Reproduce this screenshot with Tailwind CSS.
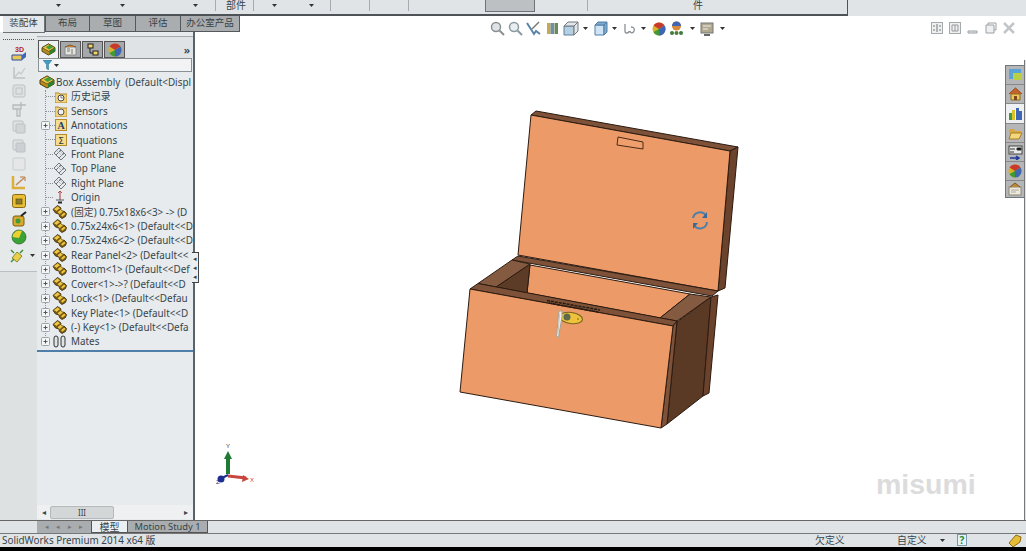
<!DOCTYPE html>
<html lang="en">
<head>
  <meta charset="UTF-8" />
  <title>SolidWorks - Box Assembly</title>
  <script src="https://cdn.jsdelivr.net/npm/@tailwindcss/browser@4"></script>
</head>
<body class="w-[1026px] h-[551px] overflow-hidden bg-white flex flex-col text-[#36454b] font-['Noto_Sans','Noto_Sans_CJK_SC',sans-serif]">

  <!-- shared icons -->
  <svg width="0" height="0" class="absolute">
    <defs>
      <symbol id="part" viewBox="0 0 15 14">
        <path d="M1 4.500 5.500 .5 9 3 8.500 5 11 6.500 12 6l2.500 2.500-1 3L10 13.500 7.500 11.500 7 9 3.500 8z" fill="#7a5c16" stroke="#43340c" stroke-width=".9"/>
        <path d="M1.500 4.200 5.500 1l3 2.200-4 3zM5 7.200 8.500 4.400l2.800 2.100-3.500 2.900zM8.500 10.200l3.600-3 2 1.700-3.600 3z" fill="#f2c640" stroke="#5b4a16" stroke-width=".6"/>
      </symbol>
      <symbol id="assembly" viewBox="0 0 16 14">
        <path d="M1 5 8 1l7 4v4l-7 4-7-4z" fill="#b58c1e" stroke="#4f3d10"/>
        <path d="M1 5 8 1l7 4-7 4z" fill="#eec144" stroke="#4f3d10" stroke-width=".7"/>
        <path d="M5 4.500 9.500 2 13 4.500 8.500 7z" fill="#3f9f3a"/>
        <path d="M9 9v4l6-4V5z" fill="#2f7f30"/>
      </symbol>
      <symbol id="plane" viewBox="0 0 14 14">
        <path d="M6 1l5 5-5 5-5-5zM8 3l5 5-5 5-5-5z" fill="none" stroke="#70777b"/>
        <path d="M4 4l5 5M6 3l5 5" fill="none" stroke="#a4aaae" stroke-width=".7"/>
      </symbol>
      <symbol id="plus" viewBox="0 0 9 9">
        <rect x=".5" y=".5" width="8" height="8" rx="1" fill="#f3f5f6" stroke="#9aa3a8"/>
        <path d="M2.500 4.500h4M4.500 2.500v4" stroke="#555"/>
      </symbol>
      <symbol id="caret" viewBox="0 0 5 3"><path d="M0 0h5L2.500 3z" fill="#333"/></symbol>
      <symbol id="wheel" viewBox="0 0 14 14">
        <circle cx="7" cy="7" r="6.500" fill="#d8b32a"/>
        <path d="M7 7 1.500 3.500A6.500 6.500 0 0 1 12.500 3.500z" fill="#c8392e"/>
        <path d="M7 7 12.500 3.500A6.500 6.500 0 0 1 7 13.500z" fill="#3f66b5"/>
        <path d="M7 7V13.500A6.500 6.500 0 0 1 1.500 10z" fill="#3f9a3a"/>
      </symbol>
    </defs>
  </svg>

  <!-- ribbon, only its bottom strip is in view -->
  <div class="h-[16px] shrink-0 flex bg-[#e0e4e6] text-[10px] leading-[11px]">
    <div class="w-[848px] h-[16px] border-b-2 border-r border-[#4d5356] relative">
      <svg class="absolute left-[56px] top-[4px]" width="5" height="3"><use href="#caret"/></svg>
      <svg class="absolute left-[120px] top-[4px]" width="5" height="3"><use href="#caret"/></svg>
      <svg class="absolute left-[193px] top-[4px]" width="5" height="3"><use href="#caret"/></svg>
      <svg class="absolute left-[272px] top-[4px]" width="5" height="3"><use href="#caret"/></svg>
      <svg class="absolute left-[309px] top-[4px]" width="5" height="3"><use href="#caret"/></svg>
      <div class="absolute left-[215px] top-0 h-[11px] border-l border-[#a5abae]"></div>
      <div class="absolute left-[226px] top-0">部件</div>
      <div class="absolute left-[253px] top-0 h-[11px] border-l border-[#a5abae]"></div>
      <div class="absolute left-[330px] top-0 h-[11px] border-l border-[#a5abae]"></div>
      <div class="absolute left-[369px] top-0 h-[11px] border-l border-[#a5abae]"></div>
      <div class="absolute left-[408px] top-0 h-[11px] border-l border-[#a5abae]"></div>
      <div class="absolute left-[485px] top-0 w-[50px] h-[12px] bg-[#bcc0c2] border-x border-b border-[#6d7376]"></div>
      <div class="absolute left-[587px] top-0 h-[11px] border-l border-[#a5abae]"></div>
      <div class="absolute left-[693px] top-0">件</div>
    </div>
  </div>

  <!-- command manager tabs -->
  <div class="h-[16px] shrink-0 flex pl-[3px] text-[9.500px] leading-[14px] text-center text-[#3a3f42]">
    <div class="w-[42px] h-[17px] bg-[#e4e8ea] border-r border-b border-[#6d7376] z-10">装配体</div>
    <div class="w-[45px] bg-[#a9adaf] border border-t-0 border-[#55595c]">布局</div>
    <div class="w-[46px] bg-[#a9adaf] border border-t-0 border-l-0 border-[#55595c]">草图</div>
    <div class="w-[45px] bg-[#a9adaf] border border-t-0 border-l-0 border-[#55595c]">评估</div>
    <div class="w-[59px] bg-[#a9adaf] border border-t-0 border-l-0 border-[#55595c]">办公室产品</div>
  </div>

  <!-- main area -->
  <div class="flex-1 min-h-0 flex">

    <!-- left icon strip -->
    <div class="w-[37px] shrink-0 flex flex-col bg-[#dee1e2]">
      <div class="h-[240px] flex flex-col items-center pt-[7px] gap-[2.300px] border-b border-[#b9bfc2] bg-[#e6e9ea]">
        <div class="w-[31px] border-t border-dotted border-[#555] mb-[4px]"></div>
        <svg width="16" height="16" viewBox="0 0 16 16"><text x="4" y="6" font-size="7" font-weight="700" fill="#b3261e" font-family="Liberation Sans">3D</text><path d="M1 9h10v5H1z" fill="#e9c75a" stroke="#2d4f9e"/><path d="M11 9l4-3v5l-4 3z" fill="#3d66b8"/></svg>
        <svg width="16" height="16" viewBox="0 0 16 16"><path d="M3 2v11h11" fill="none" stroke="#bcc1c3" stroke-width="1.500"/><path d="M3 13l5-6 2 2 4-6" fill="none" stroke="#c6cacc" stroke-width="1.300"/></svg>
        <svg width="16" height="16" viewBox="0 0 16 16"><rect x="2" y="2" width="12" height="12" rx="2" fill="#dfe2e3" stroke="#bcc1c3"/><rect x="5" y="5" width="6" height="6" fill="none" stroke="#bcc1c3"/></svg>
        <svg width="16" height="16" viewBox="0 0 16 16"><path d="M2 4h8v4H2zM6 8h3v7H6zM10 1v6M10 4h5" fill="#dfe2e3" stroke="#b5babc" stroke-width="1.300"/></svg>
        <svg width="16" height="16" viewBox="0 0 16 16"><rect x="2" y="2" width="10" height="10" rx="1" fill="#dfe2e3" stroke="#bcc1c3"/><rect x="5" y="5" width="9" height="9" rx="1" fill="#d2d6d8" stroke="#bcc1c3"/></svg>
        <svg width="16" height="16" viewBox="0 0 16 16"><rect x="2" y="2" width="10" height="10" rx="1" fill="#dfe2e3" stroke="#bcc1c3"/><rect x="5" y="5" width="9" height="9" rx="1" fill="#ccd0d2" stroke="#bcc1c3"/></svg>
        <svg width="16" height="16" viewBox="0 0 16 16"><rect x="2" y="2" width="12" height="12" rx="1" fill="#e4e6e7" stroke="#c9cdcf"/></svg>
        <svg width="16" height="16" viewBox="0 0 16 16"><path d="M2 2v12h12" fill="none" stroke="#dcae3c" stroke-width="2.500"/><path d="M5 11l8-7" stroke="#c48a50" stroke-width="1.500"/><path d="M9 3h5v4" fill="none" stroke="#b5743c"/></svg>
        <svg width="16" height="16" viewBox="0 0 16 16"><rect x="1.500" y="1.500" width="13" height="13" rx="2" fill="#e9bd36" stroke="#8a6a12"/><rect x="5" y="6" width="6" height="5" fill="#8a7a2a" stroke="#5f5010" stroke-width=".7"/></svg>
        <svg width="16" height="16" viewBox="0 0 16 16"><rect x="2" y="5" width="11" height="10" rx="2" fill="#d8a92c" stroke="#7a5f12"/><circle cx="7" cy="10" r="2.500" fill="#3f9a3a"/><path d="M10 5l5-4" stroke="#222" stroke-width="2"/></svg>
        <svg width="16" height="16" viewBox="0 0 16 16"><circle cx="8" cy="8" r="7" fill="#3aa336" stroke="#25601f" stroke-width=".7"/><path d="M1.500 8A7 7 0 0 1 11 2L8 9z" fill="#ecd02e"/></svg>
        <div class="flex items-center gap-[5px] pl-[7px]">
          <svg class="shrink-0" width="16" height="16" viewBox="0 0 16 16"><path d="M8 4l5 4-5 6-5-4z" fill="#e9cf4a" stroke="#8a8a2e"/><path d="M2 2l3 3M14 2l-3 3M2 14l3-3" stroke="#3f8f3a" stroke-width="1.500"/></svg>
          <svg class="shrink-0" width="5" height="3"><use href="#caret"/></svg>
        </div>
      </div>
    </div>

    <!-- feature manager -->
    <div class="w-[158px] shrink-0 flex flex-col bg-[#e7ebee] border-r-2 border-[#59636a] relative">
      <div class="h-[26px] shrink-0 pt-[4px]">
        <div class="h-[22px] flex items-end pl-[1px] gap-[1px] pt-[4px] bg-[#dfe3e6] border-t border-[#a4aaad]">
          <div class="w-[21px] h-[18px] bg-[#eef1f3] border border-b-0 border-[#555] flex items-center justify-center">
            <svg width="15" height="13"><use href="#assembly"/></svg>
          </div>
          <div class="w-[21px] h-[17px] bg-[#a5a9ab] border border-[#555] flex items-center justify-center">
            <svg width="13" height="12" viewBox="0 0 13 12"><path d="M1 3h11v8H1z" fill="#e5e5df" stroke="#888"/><path d="M3 5h3M3 7h3M8 5v5" stroke="#777"/><path d="M1 3l5-2 6 2" fill="#c9843b" stroke="#8a5a28"/></svg>
          </div>
          <div class="w-[21px] h-[17px] bg-[#a5a9ab] border border-[#555] flex items-center justify-center">
            <svg width="13" height="13" viewBox="0 0 13 13"><rect x="2" y="1" width="5" height="4" fill="#f1d36b" stroke="#222"/><rect x="7" y="8" width="5" height="4" fill="#f1d36b" stroke="#222"/><path d="M4 5v5h3" fill="none" stroke="#222"/></svg>
          </div>
          <div class="w-[21px] h-[17px] bg-[#a5a9ab] border border-[#555] flex items-center justify-center">
            <svg width="14" height="14"><use href="#wheel"/></svg>
          </div>
          <span class="ml-auto mr-[3px] mb-[2px] text-[11px] leading-[12px] font-semibold">»</span>
        </div>
      </div>
      <div class="h-[14px] shrink-0 mx-[1px] bg-[#f1f3f4] border border-[#8a9094] flex items-center pl-[4px] gap-[2px]">
        <svg class="shrink-0" width="9" height="10" viewBox="0 0 9 10"><path d="M0 0h9L5.500 4.500V10L3.500 8.500v-4z" fill="#3f9fc4" stroke="#2a6f8f" stroke-width=".5"/></svg>
        <svg class="shrink-0" width="5" height="3"><use href="#caret"/></svg>
      </div>

      <div class="relative pt-[3px] text-[9.900px] leading-[14.420px] whitespace-nowrap overflow-hidden">
        <!-- tree guide line -->
        <div class="absolute left-[8px] top-[18px] h-[252px] border-l border-dotted border-[#8a9094]"></div>

        <div class="relative flex items-center h-[14.420px] pl-[2px]"><svg class="shrink-0 mr-[1px]" width="16" height="14"><use href="#assembly"/></svg><span>Box Assembly &nbsp;(Default&lt;Displ</span></div>
        <div class="relative flex items-center h-[14.420px] pl-[9px]"><span class="shrink-0 w-[9px] border-t border-dotted border-[#8a9094]"></span><svg class="shrink-0 mr-[4px]" width="12" height="12" viewBox="0 0 12 12"><path d="M0 2h4l1 1h7v9H0z" fill="#f2d27a" stroke="#b58a2c"/><circle cx="6" cy="7" r="3" fill="#fff" stroke="#444"/><path d="M6 5v2h2" fill="none" stroke="#444" stroke-width=".7"/></svg><span>历史记录</span></div>
        <div class="relative flex items-center h-[14.420px] pl-[9px]"><span class="shrink-0 w-[9px] border-t border-dotted border-[#8a9094]"></span><svg class="shrink-0 mr-[4px]" width="12" height="12" viewBox="0 0 12 12"><path d="M0 2h4l1 1h7v9H0z" fill="#f2d27a" stroke="#b58a2c"/><circle cx="6" cy="7" r="3" fill="#eee" stroke="#555"/></svg><span>Sensors</span></div>
        <div class="relative flex items-center h-[14.420px] pl-[4px]"><svg class="shrink-0" width="9" height="9"><use href="#plus"/></svg><span class="shrink-0 w-[5px] border-t border-dotted border-[#8a9094]"></span><svg class="shrink-0 mr-[4px]" width="12" height="12" viewBox="0 0 12 12"><rect x=".5" y=".5" width="11" height="11" fill="#f5dc8e" stroke="#b58a2c"/><text x="6" y="10" text-anchor="middle" font-size="10" font-weight="700" fill="#1f3a6e" font-family="Liberation Serif">A</text></svg><span>Annotations</span></div>
        <div class="relative flex items-center h-[14.420px] pl-[9px]"><span class="shrink-0 w-[9px] border-t border-dotted border-[#8a9094]"></span><svg class="shrink-0 mr-[4px]" width="12" height="12" viewBox="0 0 12 12"><rect x=".5" y=".5" width="11" height="11" fill="#f5dc8e" stroke="#b58a2c"/><text x="6" y="9.500" text-anchor="middle" font-size="9" fill="#333" font-family="DejaVu Sans">Σ</text></svg><span>Equations</span></div>
        <div class="relative flex items-center h-[14.420px] pl-[9px]"><span class="shrink-0 w-[7px] border-t border-dotted border-[#8a9094]"></span><svg class="shrink-0 mr-[4px]" width="14" height="14"><use href="#plane"/></svg><span>Front Plane</span></div>
        <div class="relative flex items-center h-[14.420px] pl-[9px]"><span class="shrink-0 w-[7px] border-t border-dotted border-[#8a9094]"></span><svg class="shrink-0 mr-[4px]" width="14" height="14"><use href="#plane"/></svg><span>Top Plane</span></div>
        <div class="relative flex items-center h-[14.420px] pl-[9px]"><span class="shrink-0 w-[7px] border-t border-dotted border-[#8a9094]"></span><svg class="shrink-0 mr-[4px]" width="14" height="14"><use href="#plane"/></svg><span>Right Plane</span></div>
        <div class="relative flex items-center h-[14.420px] pl-[9px]"><span class="shrink-0 w-[7px] border-t border-dotted border-[#8a9094]"></span><svg class="shrink-0 mr-[4px]" width="14" height="14" viewBox="0 0 14 14"><path d="M7 1v9" stroke="#b03030"/><path d="M5 3l2-2 2 2" fill="none" stroke="#b03030" stroke-width=".8"/><path d="M3 10h8" stroke="#555"/><path d="M5 12.500h4" stroke="#222" stroke-width="2"/></svg><span>Origin</span></div>
        <div class="relative flex items-center h-[14.420px] pl-[4px] gap-[2px]"><svg class="shrink-0" width="9" height="9"><use href="#plus"/></svg><svg class="shrink-0 mr-[2px]" width="15" height="14"><use href="#part"/></svg><span>(固定) 0.75x18x6&lt;3&gt; -&gt; (D</span></div>
        <div class="relative flex items-center h-[14.420px] pl-[4px] gap-[2px]"><svg class="shrink-0" width="9" height="9"><use href="#plus"/></svg><svg class="shrink-0 mr-[2px]" width="15" height="14"><use href="#part"/></svg><span>0.75x24x6&lt;1&gt; (Default&lt;&lt;D</span></div>
        <div class="relative flex items-center h-[14.420px] pl-[4px] gap-[2px]"><svg class="shrink-0" width="9" height="9"><use href="#plus"/></svg><svg class="shrink-0 mr-[2px]" width="15" height="14"><use href="#part"/></svg><span>0.75x24x6&lt;2&gt; (Default&lt;&lt;D</span></div>
        <div class="relative flex items-center h-[14.420px] pl-[4px] gap-[2px]"><svg class="shrink-0" width="9" height="9"><use href="#plus"/></svg><svg class="shrink-0 mr-[2px]" width="15" height="14"><use href="#part"/></svg><span>Rear Panel&lt;2&gt; (Default&lt;&lt;</span></div>
        <div class="relative flex items-center h-[14.420px] pl-[4px] gap-[2px]"><svg class="shrink-0" width="9" height="9"><use href="#plus"/></svg><svg class="shrink-0 mr-[2px]" width="15" height="14"><use href="#part"/></svg><span>Bottom&lt;1&gt; (Default&lt;&lt;Def</span></div>
        <div class="relative flex items-center h-[14.420px] pl-[4px] gap-[2px]"><svg class="shrink-0" width="9" height="9"><use href="#plus"/></svg><svg class="shrink-0 mr-[2px]" width="15" height="14"><use href="#part"/></svg><span>Cover&lt;1&gt;-&gt;? (Default&lt;&lt;D</span></div>
        <div class="relative flex items-center h-[14.420px] pl-[4px] gap-[2px]"><svg class="shrink-0" width="9" height="9"><use href="#plus"/></svg><svg class="shrink-0 mr-[2px]" width="15" height="14"><use href="#part"/></svg><span>Lock&lt;1&gt; (Default&lt;&lt;Defau</span></div>
        <div class="relative flex items-center h-[14.420px] pl-[4px] gap-[2px]"><svg class="shrink-0" width="9" height="9"><use href="#plus"/></svg><svg class="shrink-0 mr-[2px]" width="15" height="14"><use href="#part"/></svg><span>Key Plate&lt;1&gt; (Default&lt;&lt;D</span></div>
        <div class="relative flex items-center h-[14.420px] pl-[4px] gap-[2px]"><svg class="shrink-0" width="9" height="9"><use href="#plus"/></svg><svg class="shrink-0 mr-[2px]" width="15" height="14"><use href="#part"/></svg><span>(-) Key&lt;1&gt; (Default&lt;&lt;Defa</span></div>
        <div class="relative flex items-center h-[14.420px] pl-[4px] gap-[2px]"><svg class="shrink-0" width="9" height="9"><use href="#plus"/></svg><svg class="shrink-0 mr-[2px]" width="15" height="13" viewBox="0 0 15 13"><rect x="2" y="1" width="4" height="11" rx="2" fill="#dfe3e6" stroke="#333"/><rect x="9" y="1" width="4" height="11" rx="2" fill="#dfe3e6" stroke="#333"/></svg><span>Mates</span></div>
        <div class="mt-[1px] border-t-2 border-[#4f7fa8]"></div>
      </div>

      <!-- scrollbar -->
      <div class="mt-auto mb-[1px] h-[14px] flex items-center text-[8px] text-[#444] bg-[#eef0f1]">
        <span class="w-[13px] text-center">◂</span>
        <div class="w-[64px] h-[13px] bg-[#d4d7d8] border border-[#b4b8ba] rounded-[2px] text-center leading-[11px]">III</div>
        <span class="ml-auto w-[14px] text-center">▸</span>
      </div>
      <!-- panel handle -->
      <div class="absolute left-[155px] top-[220px] w-[7px] h-[31px] bg-[#eceff1] border border-l-0 border-[#444] text-[7px] leading-[9px] flex flex-col items-center justify-center">
        <span>◂</span><span>◂</span><span>◂</span>
      </div>
    </div>

    <!-- graphics area -->
    <div class="flex-1 relative">
      <!-- view toolbar -->
      <div class="absolute left-[295px] top-[-12px] flex items-center h-[17px]">
        <svg class="mr-[3px]" width="15" height="15" viewBox="0 0 15 15"><circle cx="6" cy="6" r="4.500" fill="#dfe3e5" stroke="#8a8f92" stroke-width="1.500"/><path d="M9.500 9.500 14 14" stroke="#8a8f92" stroke-width="2"/></svg>
        <svg class="mr-[3px]" width="15" height="15" viewBox="0 0 15 15"><circle cx="6" cy="6" r="4.500" fill="#e9eef0" stroke="#8a9aa0" stroke-width="1.500"/><path d="M9.500 9.500 14 14" stroke="#8a9aa0" stroke-width="2"/></svg>
        <svg class="mr-[4px]" width="15" height="15" viewBox="0 0 15 15"><path d="M1 2l7 11 2-3 4 3" fill="none" stroke="#5a84a8" stroke-width="2"/><path d="M13 1 6 8" stroke="#777" stroke-width="1.500"/></svg>
        <svg class="mr-[3px]" width="15" height="15" viewBox="0 0 15 15"><rect x="2" y="2" width="3.500" height="11" fill="#c9a94a"/><rect x="5.500" y="2" width="3.500" height="11" fill="#6f8fa8"/><rect x="9.500" y="2" width="3.500" height="11" fill="#6b8a5a"/></svg>
        <svg width="16" height="15" viewBox="0 0 16 15"><path d="M1 5h10v9H1z" fill="#b5cfe3" stroke="#5f7f99"/><path d="M1 5l4-4h10l-4 4zM11 5l4-4v9l-4 4z" fill="#dfe7ec" stroke="#777"/></svg>
        <svg class="ml-[4px] mr-[6px]" width="5" height="3"><use href="#caret"/></svg>
        <svg width="14" height="15" viewBox="0 0 14 15"><path d="M1 4h9v10H1z" fill="#cfe4f4" stroke="#4f7fa8"/><path d="M1 4l3-3h9l-3 3zM10 4l3-3v10l-3 3z" fill="#7fa9cc" stroke="#4f7fa8"/></svg>
        <svg class="ml-[4px] mr-[5px]" width="5" height="3"><use href="#caret"/></svg>
        <svg width="15" height="15" viewBox="0 0 15 15"><path d="M3 3v7a2 2 0 0 0 4 0M9 6c3 0 4 2 3 4-1 3-4 2-4 0" fill="none" stroke="#8b9094" stroke-width="1.300"/></svg>
        <svg class="ml-[4px] mr-[6px]" width="5" height="3"><use href="#caret"/></svg>
        <svg width="14" height="14"><use href="#wheel"/></svg>
        <svg class="ml-[3px]" width="15" height="15" viewBox="0 0 15 15"><circle cx="7.500" cy="5" r="4.500" fill="#d8893a"/><path d="M7.500 5 3 5A4.500 4.500 0 0 1 12 5z" fill="#3f66b5"/><circle cx="3" cy="12" r="2" fill="#3f7a3a"/><circle cx="7.500" cy="12" r="2" fill="#4f7a3a"/><circle cx="12" cy="12" r="2" fill="#3f7a3a"/></svg>
        <svg class="ml-[6px] mr-[5px]" width="5" height="3"><use href="#caret"/></svg>
        <svg width="14" height="14" viewBox="0 0 14 14"><rect x="1" y="1" width="12" height="10" fill="#b2a88f" stroke="#777"/><path d="M3 4h8M3 7h5" stroke="#eee"/><path d="M4 13h6" stroke="#666" stroke-width="2"/></svg>
        <svg class="ml-[6px]" width="5" height="3"><use href="#caret"/></svg>
      </div>
      <!-- window buttons -->
      <div class="absolute left-[736px] top-[-10px] flex items-center gap-[6px]">
        <svg width="12" height="12" viewBox="0 0 12 12"><rect x=".5" y=".5" width="11" height="11" fill="#eef0f1" stroke="#a4a9ac"/><path d="M6 2v8M3 3v2M9 3v2M3 7v2M9 7v2" stroke="#777"/></svg>
        <svg width="12" height="12" viewBox="0 0 12 12"><rect x=".5" y=".5" width="11" height="11" fill="#eef0f1" stroke="#a4a9ac"/><path d="M3 3h6v6H3zM6 3v6" fill="none" stroke="#999"/></svg>
        <svg width="12" height="12" viewBox="0 0 12 12"><path d="M1 9h9v2H1z" fill="#e8eaeb" stroke="#9aa0a3"/></svg>
        <svg width="12" height="12" viewBox="0 0 12 12"><path d="M3 3V1h8v7H9" fill="none" stroke="#9aa0a3"/><path d="M1 3h8v8H1z" fill="#eef0f1" stroke="#9aa0a3"/></svg>
        <svg width="12" height="12" viewBox="0 0 12 12"><path d="M1 1l10 10M11 1 1 11" stroke="#c2c6c8" stroke-width="2.500"/></svg>
      </div>

      <!-- model view -->
      <svg class="absolute left-0 top-0" width="831" height="488" viewBox="195 32 831 488">
        <g stroke="#2c1a10" stroke-width="1" stroke-linejoin="round">
          <!-- lid -->
          <path d="M531 115 536 111 738 147 730 151z" fill="#7d5238"/>
          <path d="M738 147 725 288 718 291 730 151z" fill="#6b432c"/>
          <path d="M531 115 730 151 718 291 518 255z" fill="#ec9b68"/>
          <path d="M618 137 643 142 643 149 617 145z" fill="#ee9f6c" stroke="#4a2a18"/>
          <!-- inside -->
          <path d="M530 265 690 294 660 318 527 293z" fill="#ec9b68"/>
          <path d="M530 264 496 287 527 293z" fill="#5c3c26"/>
          <!-- rim -->
          <path d="M518 256 718 291 712 296 512 260z" fill="#7d5238"/>
          <path d="M478 283.500 512 260 530 264 496 287z" fill="#845a40"/>
          <path d="M690 294 711 297 677 321 660 318z" fill="#845a40"/>
          <path d="M470 289 478 283.500 677 321 673 326z" fill="#7d5238"/>
          <!-- body -->
          <path d="M677 322 711 297 703 396 667 424z" fill="#5a3a25"/>
          <path d="M711 297 718 295 709 393 703 396z" fill="#6b432c"/>
          <path d="M673 326 677 321 667 424 661 428z" fill="#7d5238"/>
          <path d="M470 289 673 326 661 428 460 392z" fill="#ec9b68"/>
        </g>
        <!-- lock -->
        <path d="M547 300.500 600 310M549 303 598 312" stroke="#2a1c12" stroke-width="1.500" stroke-dasharray="3 1"/>
        <ellipse cx="571" cy="318" rx="11.500" ry="5.500" transform="rotate(8 571 318)" fill="#eec23a" stroke="#7a641e"/>
        <circle cx="567" cy="317" r="3.500" fill="#5f6a4a"/>
        <circle cx="578" cy="319" r=".8" fill="#6b5a1e"/>
        <path d="M559 311 556.500 336 558.500 337.500 562 317 562 311z" fill="#f1efe8" stroke="#a4a296"/>
        <path d="M559.500 314 558 334" stroke="#c9c7bb"/>
        <!-- rotate cursor -->
        <g fill="none" stroke="#4f7fa8" stroke-width="2">
          <path d="M693 218a7 7 0 0 1 13-2"/><path d="M707 222a7 7 0 0 1-13 3"/>
        </g>
        <path d="M707 212v6h-5zM693 229v-6h5z" fill="#3d6a94"/>
        <!-- triad -->
        <path d="M228 474V458" stroke="#1f7a34" stroke-width="4"/>
        <path d="M228 451l4 8h-8z" fill="#1f7a34"/>
        <path d="M228 476 246 478" stroke="#c9463e" stroke-width="3"/>
        <path d="M249 479l-7 3 1-7z" fill="#c9463e"/>
        <circle cx="221" cy="479" r="3.500" fill="#1e2f8f"/>
        <path d="M222 478 228 475" stroke="#1e2f8f" stroke-width="2"/>
        <text x="226" y="448" font-size="6" fill="#333" font-family="Liberation Sans">Y</text>
        <text x="250" y="482" font-size="6" fill="#c9463e" font-family="Liberation Sans">X</text>
        <text x="216" y="484" font-size="6" fill="#1e2f8f" font-family="Liberation Sans">Z</text>
      </svg>

      <div class="absolute left-[681px] top-[434px] text-[28.500px] leading-[36px] font-bold text-[#dcdcdc] font-['Liberation_Sans',sans-serif]">misumi</div>

      <!-- window edge -->
      <div class="absolute right-0 top-[28px] bottom-0 w-[2px] border-l border-[#777] bg-[#e0e4e6]"></div>

      <!-- task pane tabs -->
      <div class="absolute right-[2px] top-[33px] w-[19px] h-[133px] flex flex-col border-t border-l border-b border-[#70767a] bg-[#b4b6b7] items-center">
        <div class="h-[19px] w-full flex items-center justify-center border-b border-[#888]"><svg width="15" height="14" viewBox="0 0 15 14"><rect x="1" y="1" width="12" height="10" fill="#58a3dc"/><rect x="5" y="5" width="9" height="7" fill="#b8cf46"/></svg></div>
        <div class="h-[19px] w-full flex items-center justify-center border-b border-[#888]"><svg width="15" height="14" viewBox="0 0 15 14"><path d="M1 7 7.500 1 14 7" fill="#c9622a" stroke="#8a4a1c"/><path d="M3 7h9v6H3z" fill="#eec65a" stroke="#8a6a1c"/><path d="M6 9h3v4H6z" fill="#7a4a1c"/></svg></div>
        <div class="h-[20px] w-full flex items-center justify-center border-b border-[#888] bg-[#eef0f1]"><svg width="15" height="15" viewBox="0 0 15 15"><rect x="1" y="7" width="3" height="7" fill="#3f9a3a"/><rect x="4" y="4" width="3" height="10" fill="#d9c22a"/><rect x="8" y="2" width="3" height="12" fill="#3f66b5"/><rect x="11" y="5" width="3" height="9" fill="#3f66b5"/></svg></div>
        <div class="h-[19px] w-full flex items-center justify-center border-b border-[#888]"><svg width="15" height="13" viewBox="0 0 15 13"><path d="M1 2h5l1 2h6v2H1z" fill="#d9a740"/><path d="M1 12 3 6h11l-3 6z" fill="#f4d77a" stroke="#a67d25"/></svg></div>
        <div class="h-[19px] w-full flex items-center justify-center border-b border-[#888]"><svg width="15" height="15" viewBox="0 0 15 15"><rect x="1" y="1" width="13" height="8" fill="#e8e8e8" stroke="#444"/><path d="M2 4h5M9 3h4v2H9zM2 7h4" stroke="#333"/><path d="M2 13h9M8 11l3 2-3 2" fill="none" stroke="#1f3a9e" stroke-width="1.500"/></svg></div>
        <div class="h-[19px] w-full flex items-center justify-center border-b border-[#888]"><svg width="14" height="14"><use href="#wheel"/></svg></div>
        <div class="flex-1 w-full flex items-center justify-center"><svg width="14" height="14" viewBox="0 0 14 14"><rect x="1" y="5" width="12" height="8" fill="#efe9dc" stroke="#8a8578"/><path d="M2 5 7 1l5 4" fill="#b98a3c" stroke="#7a5a20"/><path d="M3 8h8M3 10h5" stroke="#aaa"/></svg></div>
      </div>
    </div>
  </div>

  <!-- model / motion study tabs -->
  <div class="h-[13px] shrink-0 flex bg-[#dfe3e5] border-t border-[#666] text-[9.300px] leading-[12px]">
    <div class="w-[37px]"></div>
    <div class="w-[54px] bg-[#a9adaf] flex items-center justify-around px-[4px] text-[7px] text-[#777]"><span>◂</span><span>◂</span><span>▸</span><span>▸</span></div>
    <div class="w-[37px] text-center text-[10px] bg-[#eceff1] border-x border-b border-[#555]">模型</div>
    <div class="w-[80px] text-center bg-[#a9adaf] border-r border-b border-[#555]">Motion Study 1</div>
  </div>

  <!-- status bar -->
  <div class="h-[14px] shrink-0 relative flex items-center border-t border-[#777] bg-[#e0e4e6] text-[9.900px] leading-[13px] whitespace-nowrap">
    <span class="pl-[2px]">SolidWorks Premium 2014 x64 版</span>
    <span class="absolute left-[815px] top-0">欠定义</span>
    <span class="absolute left-[897px] top-0">自定义</span>
    <svg class="absolute left-[940px] top-[5px]" width="5" height="3"><use href="#caret"/></svg>
    <span class="absolute left-[957px] top-0 w-[10px] h-[12px] bg-[#e8f2f4] border border-[#79a] text-[10px] leading-[10px] font-bold text-[#1f8a3a] text-center">?</span>
    <svg class="absolute left-[1008px] top-0" width="14" height="13" viewBox="0 0 14 13"><path d="M1 9 8 1l5 2-1 5-7 5z" fill="#e8bd36" stroke="#8a6a12"/></svg>
  </div>
  <div class="h-[4px] shrink-0 bg-black"></div>
</body>
</html>
